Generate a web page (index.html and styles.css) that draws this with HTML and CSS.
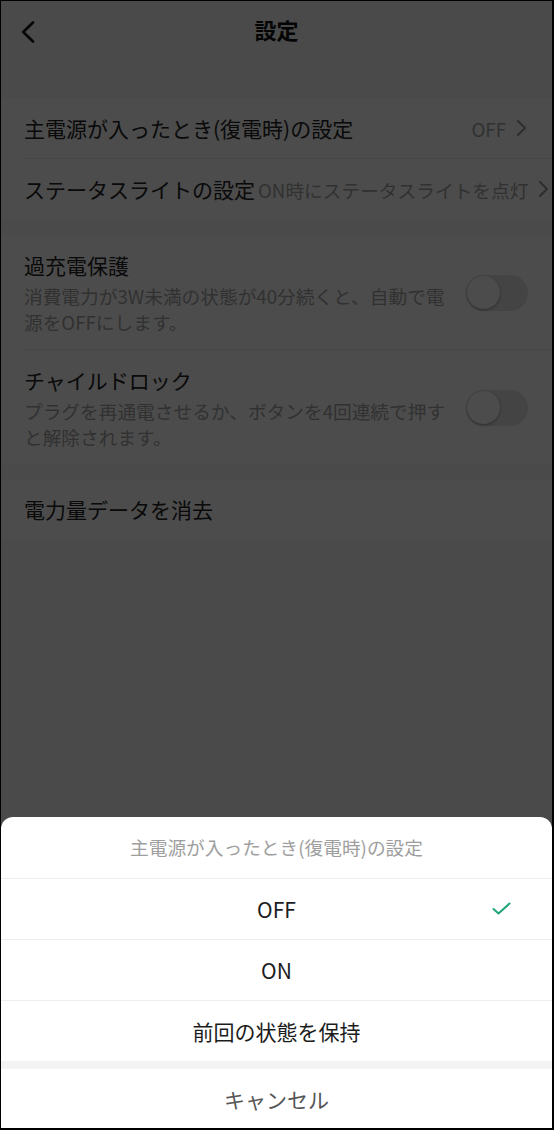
FILE: index.html
```html
<!DOCTYPE html>
<html lang="ja">
<head>
<meta charset="utf-8">
<title>設定</title>
<link rel="stylesheet" href="styles.css">
</head>
<body>
<div class="frame">
  <header class="topbar">
    <span class="back">
      <svg width="14" height="22" viewBox="0 0 14 22"><polyline points="12,1.5 2.2,11 12,20.5" fill="none" stroke="#111" stroke-width="2.6" stroke-linecap="round" stroke-linejoin="round"/></svg>
    </span>
    <h1 class="title">設定</h1>
  </header>

  <section class="group g1">
    <div class="row link">
      <span class="label">主電源が入ったとき(復電時)の設定</span>
      <span class="value">OFF</span>
      <svg class="chev" width="11" height="18" viewBox="0 0 11 18"><polyline points="2,2 9,9 2,16" fill="none" stroke="#999" stroke-width="2" stroke-linecap="round" stroke-linejoin="round"/></svg>
    </div>
    <div class="row link">
      <span class="label">ステータスライトの設定</span>
      <span class="value">ON時にステータスライトを点灯</span>
      <svg class="chev" width="11" height="18" viewBox="0 0 11 18"><polyline points="2,2 9,9 2,16" fill="none" stroke="#999" stroke-width="2" stroke-linecap="round" stroke-linejoin="round"/></svg>
    </div>
  </section>

  <section class="group g2">
    <div class="row trow">
      <div class="text">
        <div class="label">過充電保護</div>
        <div class="desc">消費電力が3W未満の状態が40分続くと、自動で電源をOFFにします。</div>
      </div>
      <span class="switch"><span class="knob"></span></span>
    </div>
    <div class="row trow">
      <div class="text">
        <div class="label">チャイルドロック</div>
        <div class="desc">プラグを再通電させるか、ボタンを4回連続で押すと解除されます。</div>
      </div>
      <span class="switch"><span class="knob"></span></span>
    </div>
  </section>

  <section class="group g3">
    <div class="row link">
      <span class="label">電力量データを消去</span>
    </div>
  </section>

  <div class="overlay"></div>

  <div class="sheet">
    <div class="sheet-title">主電源が入ったとき(復電時)の設定</div>
    <div class="option selected">
      <span>OFF</span>
      <svg class="check" width="19" height="13" viewBox="0 0 19 13"><polyline points="1.5,7 6.5,11.5 17.5,1.5" fill="none" stroke="#22a47b" stroke-width="2" stroke-linecap="round" stroke-linejoin="round"/></svg>
    </div>
    <div class="option"><span>ON</span></div>
    <div class="option"><span>前回の状態を保持</span></div>
    <div class="sheet-gap"></div>
    <div class="cancel">キャンセル</div>
  </div>
</div>
</body>
</html>
```

FILE: styles.css
```css
* { box-sizing: border-box; }

html, body {
  margin: 0;
  padding: 0;
  background: #000;
}

body {
  font-family: "Noto Sans CJK JP", "Noto Sans", sans-serif;
  color: #222;
}

.frame {
  position: relative;
  width: 554px;
  height: 1130px;
  overflow: hidden;
  background: #f8f8f8;
  border: 1px solid #000;
  border-right-width: 2px;
  border-bottom-width: 2px;
}

.topbar {
  position: relative;
  height: 62px;
  display: flex;
  align-items: center;
  justify-content: center;
}

.back {
  position: absolute;
  left: 20px;
  top: 20px;
  display: flex;
}

.title {
  margin: 0 0 6px;
  font-size: 22px;
  font-weight: 700;
  line-height: 30px;
  color: #111;
}

.group {
  background: #fff;
}

.g1 { margin-top: 35px; }
.g2 { margin-top: 16px; }
.g3 { margin-top: 15px; }

.row {
  margin-left: 23px;
  padding-right: 25px;
  display: flex;
  align-items: center;
}

.row + .row {
  border-top: 1px solid #ededed;
}

.link {
  height: 60px;
  white-space: nowrap;
}

.row + .link { height: 61px; }

.label {
  font-size: 21px;
  line-height: 30px;
  color: #222;
  flex-shrink: 0;
}

.value {
  margin-left: auto;
  padding-left: 3px;
  font-size: 18.7px;
  color: #a6a6a6;
  flex-shrink: 0;
}

.chev {
  margin-left: 10px;
  flex-shrink: 0;
}

.trow {
  padding-top: 15px;
  padding-bottom: 14px;
  padding-right: 24px;
  gap: 12px;
}

.text {
  flex: 1;
  min-width: 0;
}

.desc {
  margin-top: 3px;
  font-size: 18.7px;
  line-height: 26px;
  color: #a6a6a6;
}

.switch {
  flex-shrink: 0;
  position: relative;
  width: 62px;
  height: 36px;
  border-radius: 18px;
  background: #e4e4e4;
}

.knob {
  position: absolute;
  left: 1px;
  top: 1.5px;
  width: 33px;
  height: 33px;
  border-radius: 50%;
  background: #fff;
  box-shadow: 0 1px 3px rgba(0, 0, 0, 0.35);
}

.overlay {
  position: absolute;
  inset: 0;
  background: rgba(0, 0, 0, 0.7);
}

.sheet {
  position: absolute;
  left: 0;
  right: 0;
  bottom: 0;
  background: #fff;
  border-radius: 12px 12px 0 0;
  display: flex;
  flex-direction: column;
}

.sheet-title {
  height: 61px;
  padding-bottom: 2px;
  display: flex;
  align-items: center;
  justify-content: center;
  font-size: 18.7px;
  color: #9e9e9e;
}

.option {
  position: relative;
  height: 61px;
  border-top: 1px solid #efefef;
  display: flex;
  align-items: center;
  justify-content: center;
  font-size: 21px;
  color: #1c1c1c;
}

.check {
  position: absolute;
  right: 41px;
  top: 23px;
}

.sheet-gap {
  height: 8px;
  background: #f3f3f3;
}

.cancel {
  height: 59px;
  display: flex;
  align-items: center;
  justify-content: center;
  font-size: 21px;
  color: #555;
}
```
